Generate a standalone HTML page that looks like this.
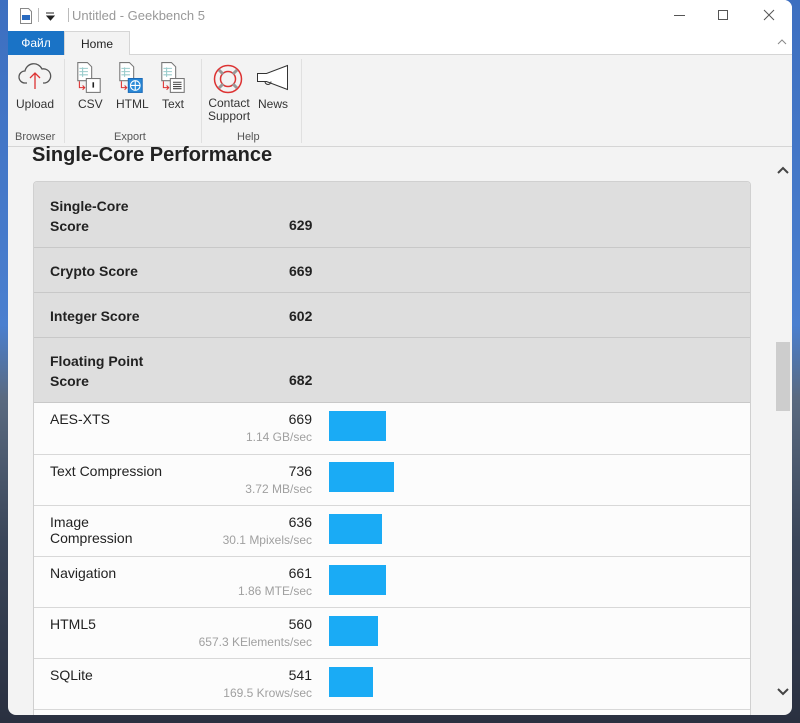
<!DOCTYPE html>
<html><head><meta charset="utf-8"><style>
*{margin:0;padding:0;box-sizing:border-box}
body{width:800px;height:723px;overflow:hidden;position:relative;font-family:"Liberation Sans","DejaVu Sans",sans-serif;
background:linear-gradient(180deg,#3d6fc0 0%,#4a7fcf 45%,#5a6a80 55%,#3a4558 75%,#2a3040 100%)}
.win{position:absolute;left:8px;top:0;width:784px;height:715px;background:#f3f3f3;border-radius:0 8px 8px 8px;overflow:hidden}
.tb{position:absolute;left:0;top:0;width:784px;height:31px;background:#fff}
.tabs{position:absolute;left:0;top:31px;width:784px;height:24px;background:#fff;border-bottom:1px solid #d5d5d5}
.ribbon{position:absolute;left:0;top:55px;width:784px;height:92px;background:#f3f3f3;border-bottom:1px solid #d5d5d5}
.t{position:absolute;white-space:nowrap}
.rl{font-size:12px;color:#333}
.gl{font-size:11px;color:#555}
.sep{position:absolute;top:4px;width:1px;height:84px;background:#e0e0e0}
.card{position:absolute;left:25px;top:181px;width:718px;height:560px;background:#fcfcfc;border:1px solid #d0d0d0;border-radius:4px;overflow:hidden}
.hr{position:absolute;left:0;width:716px;background:#dedede;border-bottom:1px solid #c8c8c8}
.br{position:absolute;left:0;width:716px;border-bottom:1px solid #d8d8d8}
.b{font-weight:bold;font-size:14px;color:#222}
.n{font-size:14px;color:#222}
.s{font-size:12px;color:#a0a0a0}
.bar{position:absolute;left:295px;height:30px;background:#1aabf5}
</style></head><body>
<div class="win">
 <div class="tb">
  <svg class="t" style="left:11px;top:8px" width="14" height="16" viewBox="0 0 14 16"><path d="M1.5 .5h8l3 3v12h-11z" fill="#fff" stroke="#888"/><rect x="3" y="7" width="8" height="5" fill="#2a6bc0"/></svg>
  <div class="t" style="left:30px;top:8px;width:1px;height:14px;background:#bbb"></div>
  <svg class="t" style="left:38px;top:12px" width="9" height="9"><path d="M0 1h8M1 4l3.5 4L8 4z" stroke="#222" fill="#222"/></svg>
  <div class="t" style="left:60px;top:8px;width:1px;height:14px;background:#bbb"></div>
  <div class="t" style="left:64px;top:8px;font-size:13px;color:#999">Untitled - Geekbench 5</div>
  <div class="t" style="left:666px;top:15px;width:11px;height:1px;background:#555"></div>
  <div class="t" style="left:710px;top:10px;width:10px;height:10px;border:1px solid #555"></div>
  <svg class="t" style="left:755px;top:9px" width="12" height="12"><path d="M1 1l10 10M11 1L1 11" stroke="#555"/></svg>
 </div>
 <div class="tabs">
  <div class="t" style="left:0;top:0;width:56px;height:24px;background:#1a73c6;color:#fff;font-size:12px;text-align:center;line-height:24px">Файл</div>
  <div class="t" style="left:56px;top:0;width:66px;height:25px;background:#f3f3f3;border:1px solid #d5d5d5;border-bottom:none;font-size:12px;text-align:center;line-height:24px;color:#222">Home</div>
  <svg class="t" style="left:769px;top:8px" width="10" height="6"><path d="M1 5l4-4 4 4" stroke="#888" fill="none"/></svg>
 </div>
 <div class="ribbon">
  <svg class="t" style="left:10px;top:6px" width="34" height="30" viewBox="0 0 34 30"><path d="M9 22H7a6 6 0 0 1 0-12 9 9 0 0 1 17-2 7 7 0 0 1 3 14h-2" fill="none" stroke="#555" stroke-width="1.3"/><path d="M17 28V12M12 17l5-5 5 5" fill="none" stroke="#d33" stroke-width="1.3"/></svg>
  <div class="t rl" style="left:8px;top:42px">Upload</div>
  <div class="t gl" style="left:7px;top:76px">Browser</div>
  <div class="sep" style="left:56px"></div>
  <svg class="t" style="left:64px;top:7px" width="34" height="32" viewBox="6 0 24 30"><path d="M7.5 .5h9l4 4v13h-13z" fill="#fff" stroke="#777"/><path d="M9 6h8M9 9h8M9 12h8M12 5v9" stroke="#9cc"/><path d="M9 18v6h5M12 22l2 2-2 2" stroke="#d33" fill="none"/><rect x="15.5" y="15.5" width="13" height="13" fill="#fff" stroke="#777"/><path d="M22 19v5" stroke="#222" stroke-width="1.5"/></svg>
  <div class="t rl" style="left:70px;top:42px">CSV</div>
  <svg class="t" style="left:106px;top:7px" width="34" height="32" viewBox="6 0 24 30"><path d="M7.5 .5h9l4 4v13h-13z" fill="#fff" stroke="#777"/><path d="M9 6h8M9 9h8M9 12h8M12 5v9" stroke="#9cc"/><path d="M9 18v6h5M12 22l2 2-2 2" stroke="#d33" fill="none"/><rect x="15.5" y="15.5" width="13" height="13" fill="#2a8ad8" stroke="#1a6ab8"/><circle cx="22" cy="22" r="4.5" fill="none" stroke="#fff"/><path d="M17.5 22h9M22 17.5v9" stroke="#fff"/></svg>
  <div class="t rl" style="left:108px;top:42px">HTML</div>
  <svg class="t" style="left:148px;top:7px" width="34" height="32" viewBox="6 0 24 30"><path d="M7.5 .5h9l4 4v13h-13z" fill="#fff" stroke="#777"/><path d="M9 6h8M9 9h8M9 12h8M12 5v9" stroke="#9cc"/><path d="M9 18v6h5M12 22l2 2-2 2" stroke="#d33" fill="none"/><rect x="15.5" y="15.5" width="13" height="13" fill="#fff" stroke="#777"/><path d="M18 19h8M18 21h8M18 23h8M18 25h8" stroke="#444"/></svg>
  <div class="t rl" style="left:154px;top:42px">Text</div>
  <div class="t gl" style="left:106px;top:76px">Export</div>
  <div class="sep" style="left:193px"></div>
  <svg class="t" style="left:204px;top:8px" width="32" height="32"><circle cx="16" cy="16" r="13.5" fill="none" stroke="#d33" stroke-width="1.5"/><circle cx="16" cy="16" r="7.5" fill="none" stroke="#d33" stroke-width="1.5"/><path d="M7 7l4 4M25 7l-4 4M7 25l4-4M25 25l-4-4" stroke="#999" stroke-width="3"/></svg>
  <div class="t rl" style="left:200px;top:42px;line-height:13px;text-align:center">Contact<br>Support</div>
  <svg class="t" style="left:248px;top:9px" width="34" height="28"><path d="M1.5 9.5h9l21-8v24l-21-8h-9z" fill="#fff" stroke="#333"/><path d="M9 17.5a3 3 0 0 0 6 0" fill="none" stroke="#333"/></svg>
  <div class="t rl" style="left:250px;top:42px">News</div>
  <div class="t gl" style="left:229px;top:76px">Help</div>
  <div class="sep" style="left:293px"></div>
 </div>
 <div class="t" style="left:24px;top:144px;font-size:20px;font-weight:bold;color:#222">Single-Core Performance</div>
 <svg class="t" style="left:769px;top:166px;z-index:3" width="12" height="8"><path d="M1 7l5-5 5 5" stroke="#444" stroke-width="2" fill="none"/></svg>
 <div class="t" style="left:768px;top:342px;width:14px;height:69px;background:#cdcdcd"></div>
 <svg class="t" style="left:769px;top:688px;z-index:3" width="12" height="8"><path d="M1 1l5 5 5-5" stroke="#444" stroke-width="2" fill="none"/></svg>
 <div class="card">
  <div class="hr" style="top:0;height:66px"></div>
  <div class="t b" style="left:16px;top:14px;line-height:20px">Single-Core<br>Score</div><div class="t b" style="left:255px;top:35px">629</div>
  <div class="hr" style="top:66px;height:45px"></div>
  <div class="t b" style="left:16px;top:81px">Crypto Score</div><div class="t b" style="left:255px;top:81px">669</div>
  <div class="hr" style="top:111px;height:45px"></div>
  <div class="t b" style="left:16px;top:126px">Integer Score</div><div class="t b" style="left:255px;top:126px">602</div>
  <div class="hr" style="top:156px;height:65px"></div>
  <div class="t b" style="left:16px;top:169px;line-height:20px">Floating Point<br>Score</div><div class="t b" style="left:255px;top:190px">682</div>

  <div class="br" style="top:221px;height:52px"></div>
  <div class="t n" style="left:16px;top:229px">AES-XTS</div><div class="t n" style="right:438px;top:229px">669</div><div class="t s" style="right:438px;top:248px">1.14 GB/sec</div><div class="bar" style="top:229px;width:57px"></div>
  <div class="br" style="top:273px;height:51px"></div>
  <div class="t n" style="left:16px;top:281px">Text Compression</div><div class="t n" style="right:438px;top:281px">736</div><div class="t s" style="right:438px;top:300px">3.72 MB/sec</div><div class="bar" style="top:280px;width:65px"></div>
  <div class="br" style="top:324px;height:51px"></div>
  <div class="t n" style="left:16px;top:332px;line-height:16px">Image<br>Compression</div><div class="t n" style="right:438px;top:332px">636</div><div class="t s" style="right:438px;top:351px">30.1 Mpixels/sec</div><div class="bar" style="top:332px;width:53px"></div>
  <div class="br" style="top:375px;height:51px"></div>
  <div class="t n" style="left:16px;top:383px">Navigation</div><div class="t n" style="right:438px;top:383px">661</div><div class="t s" style="right:438px;top:402px">1.86 MTE/sec</div><div class="bar" style="top:383px;width:57px"></div>
  <div class="br" style="top:426px;height:51px"></div>
  <div class="t n" style="left:16px;top:434px">HTML5</div><div class="t n" style="right:438px;top:434px">560</div><div class="t s" style="right:438px;top:453px">657.3 KElements/sec</div><div class="bar" style="top:434px;width:49px"></div>
  <div class="br" style="top:477px;height:51px"></div>
  <div class="t n" style="left:16px;top:485px">SQLite</div><div class="t n" style="right:438px;top:485px">541</div><div class="t s" style="right:438px;top:504px">169.5 Krows/sec</div><div class="bar" style="top:485px;width:44px"></div>
 </div>
</div>
</body></html>
